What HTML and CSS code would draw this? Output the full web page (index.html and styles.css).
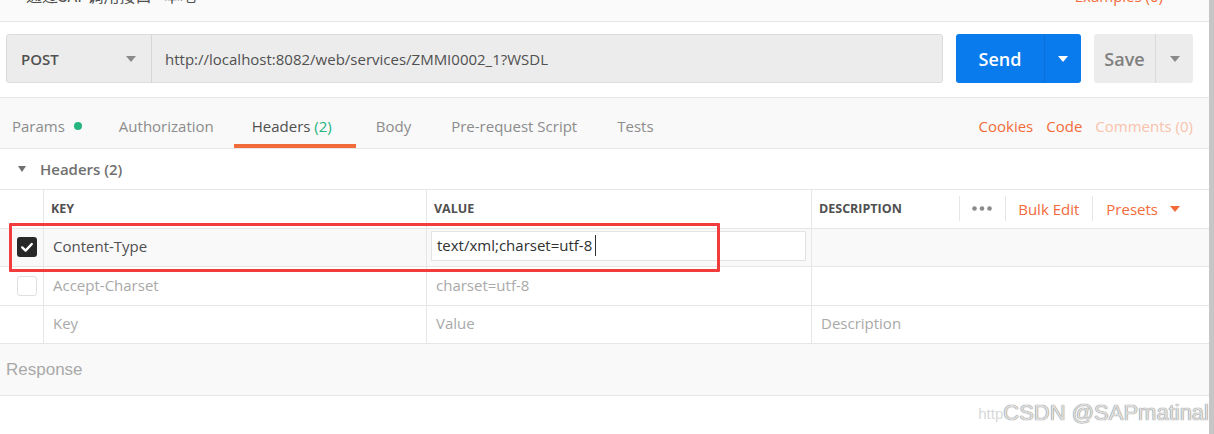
FILE: index.html
```html
<!DOCTYPE html>
<html lang="zh">
<head>
    <meta charset="UTF-8">
    <title>Headers</title>
    <link rel="stylesheet" href="styles.css">
</head>
<body>
    <div class="app">
        <div class="main">
            <div class="title-bar">
                <span class="title">通过SAP调用接口 - 本地</span>
                <span class="examples">Examples (0)</span>
            </div>
            <div class="request-bar">
                <div class="url-group">
                    <div class="method">POST <span class="caret caret-grey"></span></div>
                    <div class="url">http://localhost:8082/web/services/ZMMI0002_1?WSDL</div>
                </div>
                <div class="split-btn send">
                    <span class="btn-main">Send</span>
                    <span class="btn-arrow"><span class="caret caret-white"></span></span>
                </div>
                <div class="split-btn save">
                    <span class="btn-main">Save</span>
                    <span class="btn-arrow"><span class="caret caret-grey"></span></span>
                </div>
            </div>
            <div class="tabs">
                <div class="tab first">Params <span class="dot"></span></div>
                <div class="tab">Authorization</div>
                <div class="tab active">Headers&nbsp;<span class="count">(2)</span></div>
                <div class="tab">Body</div>
                <div class="tab">Pre-request Script</div>
                <div class="tab">Tests</div>
                <div class="tab-links">
                    <span class="link">Cookies</span>
                    <span class="link">Code</span>
                    <span class="link faded">Comments (0)</span>
                </div>
            </div>
            <div class="section-title"><span class="caret caret-dark"></span>Headers (2)</div>
            <div class="kv-table">
                <div class="kv-row kv-head">
                    <div class="kv-cell check-cell"></div>
                    <div class="kv-cell">KEY</div>
                    <div class="kv-cell">VALUE</div>
                    <div class="kv-cell">
                        DESCRIPTION
                        <div class="kv-actions">
                            <span class="action">
                                <svg width="20" height="5" viewBox="0 0 20 5"><circle cx="2.5" cy="2.5" r="2.3" fill="#8a8a8a"/><circle cx="10" cy="2.5" r="2.3" fill="#8a8a8a"/><circle cx="17.5" cy="2.5" r="2.3" fill="#8a8a8a"/></svg>
                            </span>
                            <span class="action link">Bulk Edit</span>
                            <span class="action link">Presets <span class="caret caret-orange"></span></span>
                        </div>
                    </div>
                </div>
                <div class="kv-row row-active">
                    <div class="kv-cell check-cell">
                        <span class="check on">
                            <svg width="20" height="20" viewBox="0 0 20 20"><path d="M5.2 10.4 L8.6 13.6 L14.8 7" fill="none" stroke="#fff" stroke-width="2.4" stroke-linecap="round" stroke-linejoin="round"/></svg>
                        </span>
                    </div>
                    <div class="kv-cell">Content-Type</div>
                    <div class="kv-cell value-edit">
                        <div class="value-input">text/xml;charset=utf-8<span class="text-caret"></span></div>
                    </div>
                    <div class="kv-cell"></div>
                </div>
                <div class="kv-row tall">
                    <div class="kv-cell check-cell"><span class="check"></span></div>
                    <div class="kv-cell muted">Accept-Charset</div>
                    <div class="kv-cell muted">charset=utf-8</div>
                    <div class="kv-cell"></div>
                </div>
                <div class="kv-row">
                    <div class="kv-cell check-cell"></div>
                    <div class="kv-cell muted">Key</div>
                    <div class="kv-cell muted">Value</div>
                    <div class="kv-cell muted">Description</div>
                </div>
            </div>
            <div class="response">Response</div>
        </div>
        <div class="scrollbar"></div>
    </div>
    <div class="mark-box"></div>
    <div class="watermark"><span class="wm-url">http</span>CSDN @SAPmatinal</div>
</body>
</html>
```

FILE: styles.css
```css
* {
    box-sizing: border-box;
}
body {
    margin: 0;
    width: 1214px;
    height: 434px;
    overflow: hidden;
    position: relative;
    background-color: #fff;
    font-family: "Open Sans", "Noto Sans CJK SC", sans-serif;
}
.app {
    display: flex;
    height: 100%;
}
.main {
    flex: 1;
    min-width: 0;
}
.scrollbar {
    width: 5px;
    background-color: #c6c6c6;
}

/* top title, scrolled mostly out of view */
.title-bar {
    height: 22px;
    display: flex;
    justify-content: space-between;
    align-items: flex-start;
    overflow: hidden;
    background-color: #fafafa;
    border-bottom: 1px solid #e6e6e6;
    padding: 0 46px 0 26px;
}
.title {
    font-family: "Noto Sans CJK SC", sans-serif;
    font-size: 16px;
    line-height: 20px;
    margin-top: -15px;
    color: #505050;
}
.examples {
    font-size: 15px;
    line-height: 20px;
    margin-top: -14px;
    color: #f26b3a;
}

/* url + buttons */
.request-bar {
    height: 76px;
    display: flex;
    gap: 13px;
    padding: 12px 16px 14px 6px;
    border-bottom: 1px solid #e6e6e6;
}
.url-group {
    flex: 1;
    display: flex;
    background-color: #ececec;
    border: 1px solid #dcdcdc;
    border-radius: 3px;
}
.method {
    width: 145px;
    display: flex;
    align-items: center;
    justify-content: space-between;
    padding: 0 15px 0 14px;
    border-right: 1px solid #d6d6d6;
    font-size: 15px;
    font-weight: 600;
    color: #505050;
}
.url {
    display: flex;
    align-items: center;
    padding-left: 13px;
    font-size: 15px;
    color: #505050;
}
.split-btn {
    display: flex;
    border-radius: 3px;
}
.split-btn .btn-main {
    flex: 1;
    display: flex;
    align-items: center;
    justify-content: center;
    font-size: 18px;
    font-weight: 600;
}
.split-btn .btn-arrow {
    display: flex;
    align-items: center;
    justify-content: center;
}
.send {
    width: 125px;
    background-color: #097bed;
    color: #fff;
}
.send .btn-arrow {
    width: 37px;
    border-left: 1px solid #0a6fd6;
}
.save {
    width: 99px;
    background-color: #ececec;
    color: #808080;
}
.save .btn-arrow {
    width: 38px;
    border-left: 1px solid #dadada;
}
.caret {
    display: inline-block;
    width: 0;
    height: 0;
    border-left: 5px solid transparent;
    border-right: 5px solid transparent;
    border-top: 6px solid #888;
}
.caret-white {
    border-top-color: #fff;
}
.caret-grey {
    border-top-color: #8a8a8a;
}
.caret-orange {
    border-top-color: #f26b3a;
    margin-left: 12px;
}
.caret-dark {
    border-left-width: 4px;
    border-right-width: 4px;
    border-top-color: #707070;
    margin-right: 14px;
}

/* tabs */
.tabs {
    height: 51px;
    display: flex;
    background-color: #f9f9f9;
    border-bottom: 1px solid #e6e6e6;
}
.tab {
    display: flex;
    align-items: center;
    padding: 10px 20px 0;
    border-bottom: 4px solid transparent;
    font-size: 15px;
    color: #8c8c8c;
}
.tab.first {
    padding-left: 12px;
    padding-right: 17px;
}
.tab.active {
    padding-left: 18px;
    padding-right: 24px;
    color: #505050;
    border-bottom-color: #f26b3a;
}
.count {
    color: #26b47f;
}
.dot {
    width: 8px;
    height: 8px;
    margin-left: 9px;
    border-radius: 50%;
    background-color: #26b47f;
}
.tab-links {
    margin-left: auto;
    display: flex;
    align-items: center;
    gap: 13px;
    padding: 6px 16px 0 0;
    font-size: 15px;
}
.link {
    color: #f26b3a;
}
.link.faded {
    color: #f9c2ab;
}

/* headers table */
.section-title {
    height: 41px;
    display: flex;
    align-items: center;
    padding-left: 18px;
    border-bottom: 1px solid #e6e6e6;
    font-size: 15px;
    font-weight: 600;
    color: #707070;
}
.kv-row {
    height: 38px;
    display: grid;
    grid-template-columns: 43px 383px 385px 1fr;
    border-bottom: 1px solid #e6e6e6;
}
.kv-row.tall {
    height: 39px;
}
.kv-head {
    height: 39px;
}
.row-active {
    background-color: #f9f9f9;
}
.kv-cell {
    display: flex;
    align-items: center;
    padding-left: 9px;
    padding-bottom: 3px;
    border-left: 1px solid #e6e6e6;
    font-size: 15px;
    color: #505050;
}
.kv-cell.check-cell {
    border-left: none;
    padding-left: 17px;
    padding-bottom: 1px;
}
.kv-head .kv-cell {
    padding-left: 7px;
    padding-bottom: 1px;
    font-size: 12.5px;
    font-weight: 700;
    color: #505050;
}
.kv-cell.muted {
    color: #a9a9a9;
}
.kv-actions {
    margin-left: auto;
    display: flex;
    align-items: center;
    padding-right: 29px;
}
.kv-head .kv-actions .action {
    height: 25px;
    display: flex;
    align-items: center;
    padding: 0 13px 0 12px;
    border-left: 1px solid #e6e6e6;
    font-size: 15px;
    font-weight: 400;
}
.kv-head .kv-actions .action:last-child {
    padding: 0 0 0 13px;
}
.check {
    width: 20px;
    height: 20px;
    border-radius: 3px;
    border: 1px solid #e0e0e0;
    background-color: #fff;
}
.check.on {
    border: none;
    background-color: #282828;
}
.check svg {
    display: block;
}
.kv-cell.value-edit {
    padding: 0 5px 3px 4px;
}
.value-input {
    flex: 1;
    height: 30px;
    display: flex;
    align-items: center;
    padding-left: 5px;
    padding-bottom: 2px;
    background-color: #fff;
    border: 1px solid #e3e3e3;
    color: #303030;
}
.text-caret {
    width: 1px;
    height: 21px;
    margin-left: 3px;
    background-color: #303030;
}

/* response */
.response {
    height: 52px;
    display: flex;
    align-items: center;
    padding-left: 6px;
    background-color: #f9f9f9;
    border-bottom: 1px solid #e6e6e6;
    font-family: "Liberation Sans", Arial, sans-serif;
    font-size: 17px;
    color: #a9a9a9;
}

/* annotation + watermark overlays */
.mark-box {
    position: absolute;
    left: 9px;
    top: 223px;
    width: 711px;
    height: 49px;
    border: 3px solid #f23b3d;
    border-radius: 1px;
}
.watermark {
    position: absolute;
    right: 5px;
    top: 400px;
    font-family: "Liberation Sans", Arial, sans-serif;
    font-size: 22px;
    color: #dedede;
    text-shadow: 0 0 1px #8a8a8a, 0 0 1px #8a8a8a;
    white-space: nowrap;
}
.wm-url {
    font-size: 15px;
    color: #d8d8d8;
    text-shadow: none;
    vertical-align: 1px;
}
```
